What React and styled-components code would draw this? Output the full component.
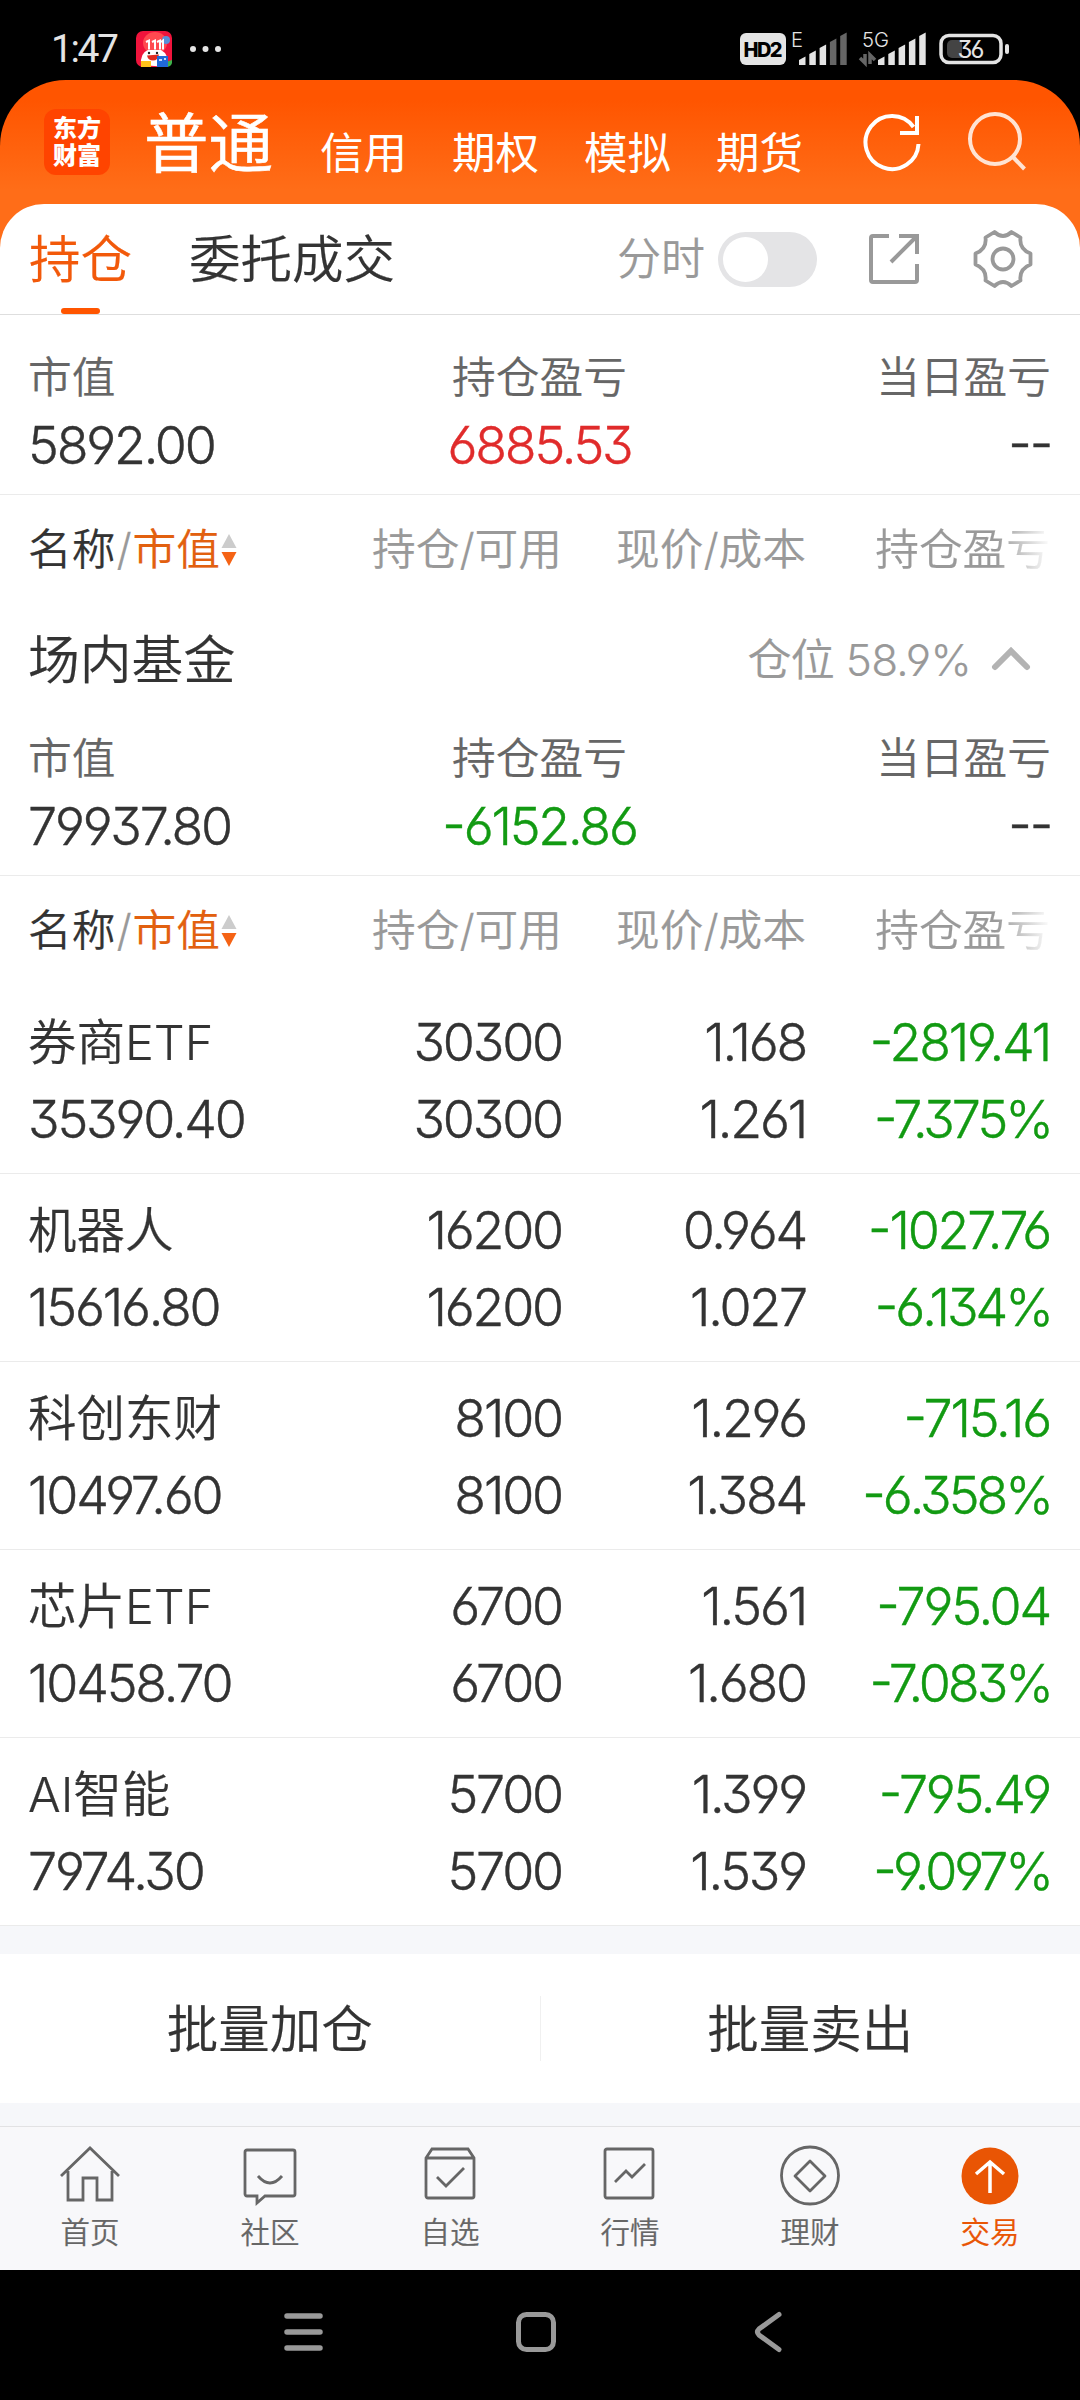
import React from 'react';
import styled, { createGlobalStyle } from 'styled-components';

const GlobalStyle = createGlobalStyle`
  * {
    box-sizing: border-box;
  }

  body {
    margin: 0;
    background: #000;
    font-family: Inter, "Noto Sans CJK SC", sans-serif;
    font-weight: 350;
    font-feature-settings: "cv03", "cv04", "cv09";
    color: #333;
  }

  svg {
    display: block;
    flex: none;
  }
`;

const Screen = styled.div`
  width: 1080px;
  height: 2400px;
  display: flex;
  flex-direction: column;
  overflow: hidden;
  background: #000;
  white-space: nowrap;
`;

const StatusBar = styled.div`
  height: 80px;
  flex: none;
  display: flex;
  align-items: center;
  padding: 18px 71px 0 51px;
  color: #e4e4e4;
`;

const Clock = styled.span`
  width: 85px;
  font: 400 39px/40px Roboto, sans-serif;
  letter-spacing: -2.4px;
`;

const StatusRight = styled.div`
  display: flex;
  margin-left: auto;
`;

const AppBody = styled.div`
  height: 2190px;
  flex: none;
  border-radius: 66px 66px 0 0;
  overflow: hidden;
  background: linear-gradient(180deg, #ff5500 0, #ff5500 20px, #ff6d18 110px, #ff6d18 100%);
`;

const Header = styled.header`
  height: 124px;
  display: flex;
  padding-left: 44px;
  color: #fff;
`;

const Logo = styled.div`
  width: 66px;
  height: 66px;
  margin-top: 29px;
  padding-top: 6px;
  border-radius: 12px;
  background: #ff4400;
  text-align: center;
  font-size: 24px;
  font-weight: 900;
  line-height: 27px;
`;

const AccountTab = styled.span`
  margin-left: ${(p) => (p.$active ? 34 : 45)}px;
  margin-top: ${(p) => (p.$active ? 22 : 31)}px;
  width: ${(p) => (p.$active ? 131 : 87)}px;
  font-size: ${(p) => (p.$active ? 64.5 : 43.5)}px;
  font-weight: 400;
  line-height: 84px;
  -webkit-text-stroke: ${(p) => (p.$active ? 0.5 : 0)}px currentColor;
`;

const HeaderIcons = styled.div`
  display: flex;
  gap: 44px;
  margin: 30px 0 0 60px;
`;

const Sheet = styled.main`
  height: 2066px;
  border-radius: 44px 44px 0 0;
  background: #fff;
  overflow: hidden;
  -webkit-text-stroke: 0.2px currentColor;
`;

const TabRow = styled.div`
  height: 111px;
  display: flex;
  padding: 0 46px 0 29px;
  border-bottom: 1px solid #dedede;
`;

const Tab = styled.div`
  display: flex;
  flex-direction: column;
  align-items: center;
  justify-content: space-between;
  margin-right: 57px;
  color: ${(p) => (p.$active ? '#f2590a' : '#333')};
  font-size: 51.5px;
  line-height: 110px;

  &::after {
    content: '';
    width: 39px;
    height: 6px;
    margin-top: -6px;
    border-radius: 3px;
    background: ${(p) => (p.$active ? '#ff5500' : 'transparent')};
  }
`;

const Tools = styled.div`
  display: flex;
  align-items: center;
  margin-left: auto;
  color: #999;
`;

const ToolLabel = styled.span`
  padding-bottom: 7px;
  font-size: 44px;
`;

const Toggle = styled.span`
  width: 99px;
  height: 55px;
  margin: 0 50px 0 13px;
  padding: 5px;
  border-radius: 28px;
  background: #e4e4e6;

  &::before {
    content: '';
    display: block;
    width: 45px;
    height: 45px;
    border-radius: 50%;
    background: #fff;
  }
`;

const Summary = styled.section`
  height: ${(p) => p.$height}px;
  display: grid;
  grid-template-columns: 1fr 1fr 1fr;
  align-content: end;
  padding: 0 29px 14px 28px;
  border-bottom: 1px solid #ebebeb;
`;

const Cell = styled.div`
  display: flex;
  flex-direction: column;
  align-items: ${(p) => p.$align};
`;

const Label = styled.span`
  color: #666;
  font-size: 43.7px;
  line-height: 68px;
`;

const tones = { up: '#e02b2b', down: '#129a12' };

const Num = styled.span`
  color: ${(p) => tones[p.$tone] || '#333'};
  font-size: 52px;
  font-weight: 300;
  font-feature-settings: "cv03", "cv04", "cv09", "case";
  letter-spacing: -2.2px;
  line-height: 68px;
  -webkit-text-stroke: 0.4px currentColor;
`;

const Percent = styled(Num)`
  margin-right: -1px;
  letter-spacing: -3px;
`;

const Columns = styled.div`
  display: grid;
  grid-template-columns: 274px 260px 244px 244px;
  padding: 0 30px 0 28px;
  text-align: right;
`;

const TableHead = styled(Columns)`
  height: ${(p) => p.$height}px;
  color: #999;
  font-size: 43.7px;
  line-height: 110px;
`;

const SortHead = styled.div`
  display: flex;
  align-items: center;
  gap: 1px;
  height: 110px;
`;

const Dark = styled.span`
  color: #333;
`;

const Hot = styled.span`
  color: #e2600f;
`;

const FadeHead = styled.span`
  background: linear-gradient(90deg, #999 0, #999 190px, #f6f6f6 240px);
  background-clip: text;
  color: transparent;
`;

const SectionTitle = styled.div`
  height: 96px;
  display: flex;
  align-items: center;
  padding: 0 49px 8px 28px;
  font-size: 51.8px;
`;

const Position = styled.div`
  display: flex;
  align-items: center;
  gap: 20px;
  margin-left: auto;
  padding-top: 1px;
  color: #999;
  font-size: 44px;
  letter-spacing: -0.7px;

  svg {
    margin-top: 4px;
  }
`;

const HoldingRow = styled(Columns)`
  height: 188px;
  padding-top: 18px;
  border-bottom: 1px solid #ebebeb;
`;

const Pair = styled.div`
  display: flex;
  flex-direction: column;

  ${Num} {
    line-height: 77px;
  }
`;

const Name = styled.span`
  height: 77px;
  font-size: 48.5px;
  line-height: 77px;
`;

const NamePair = styled(Pair)`
  text-align: left;
`;

const BatchActions = styled.div`
  height: 200px;
  display: flex;
  padding: 28px 0 23px;
  background: #f6f7fa;
`;

const BatchButton = styled.button`
  flex: 1;
  border: none;
  padding: 0 0 7px;
  background: #fff;
  color: #333;
  font: inherit;
  font-size: 51.5px;
`;

const Divider = styled.span`
  width: 1px;
  background: linear-gradient(#fff 28%, #f0f0f0 28%, #f0f0f0 72%, #fff 72%);
`;

const BottomNav = styled.nav`
  height: 144px;
  display: flex;
  border-top: 1px solid #e2e2e4;
  background: #f8f8fa;
`;

const NavItem = styled.div`
  flex: 1;
  display: flex;
  flex-direction: column;
  align-items: center;
  padding-top: 18px;
  color: ${(p) => (p.$active ? '#e95504' : '#666')};
  font-size: 29.5px;
  line-height: 50px;
`;

const SystemNav = styled.div`
  height: 130px;
  flex: none;
  display: flex;
  align-items: center;
  justify-content: center;
  gap: 191px;
  padding: 0 8px 6px 0;
`;

const GearSvg = styled.svg`
  margin-left: 51px;
`;

function Bars({ lit }) {
  return [0, 1, 2, 3, 4].map((i) => (
    <path
      key={i}
      d={`M${i * 10.3} 32v${-5 - i * 6}l6.5 -3.5v${8.5 + i * 6}z`}
      fill={i < lit ? '#e4e4e4' : '#666'}
    />
  ));
}

function StatusIcons() {
  return (
    <svg width="269" height="46" viewBox="0 -6 269 46" fontFamily="Inter, sans-serif">
      <rect x="0" y="1" width="46" height="32" rx="6" fill="#e4e4e4" />
      <text x="23" y="24.500" textAnchor="middle" fontSize="20" fontWeight="800" fill="#000" textLength="39">HD2</text>
      <text x="51" y="15" fontSize="20" fill="#e4e4e4" textLength="12" lengthAdjust="spacingAndGlyphs">E</text>
      <g transform="translate(59 1)"><Bars lit={3} /></g>
      <text x="122" y="15" fontSize="20" fill="#e4e4e4" textLength="27" lengthAdjust="spacingAndGlyphs">5G</text>
      <path d="M120 26l5 5V22M130 32V23l5 5" stroke="#666" strokeWidth="3.500" fill="none" />
      <g transform="translate(138 1)"><Bars lit={5} /></g>
      <rect x="201" y="3.500" width="60" height="27" rx="8" fill="none" stroke="#e4e4e4" strokeWidth="3.500" />
      <path d="M212 8h10v18h-10a5 5 0 0 1 -5 -5v-8a5 5 0 0 1 5 -5z" fill="#444" />
      <text x="231" y="26" textAnchor="middle" fontSize="24" fontWeight="400" fill="#e4e4e4" textLength="27">36</text>
      <rect x="265" y="12" width="4" height="10" rx="2" fill="#e4e4e4" />
    </svg>
  );
}

function PromoIcon() {
  return (
    <svg width="86" height="36" viewBox="0 0 86 36">
      <rect width="36" height="36" rx="7" fill="#f0143c" />
      <ellipse cx="19" cy="12" rx="12" ry="11" fill="#ff4a50" />
      <circle cx="30" cy="9" r="4" fill="#5a8fd8" />
      <path d="M30 36v-5l6 -2v3q-1 4 -6 4z" fill="#3cb44a" />
      <path d="M5 34q-1 -12 7 -15h13q8 4 7 17z" fill="#fff" />
      <path d="M10 11l3 -1.500v9M16 11l3 -1.500v9M21 11l3 -1.500v9M25 11l2 -1.500v9" stroke="#fff" strokeWidth="2" fill="none" />
      <circle cx="13" cy="22" r="1.200" fill="#222" />
      <circle cx="21" cy="22" r="1.200" fill="#222" />
      <path d="M11 24.500l12 -1q-1 6 -6 6t-6 -5z" fill="#e02a20" />
      <rect x="5" y="30" width="10" height="6" fill="#ffc21a" />
      <rect x="21" y="25" width="11" height="11" fill="#2068d8" />
      <path d="M23 29h3M28 28h2" stroke="#fff" strokeWidth="1.500" />
      <g fill="#e4e4e4">
        <circle cx="57" cy="18" r="3" />
        <circle cx="69.500" cy="18" r="3" />
        <circle cx="82" cy="18" r="3" />
      </g>
    </svg>
  );
}

function Gear() {
  return (
    <GearSvg width="62" height="62" viewBox="1 1 62 62" fill="none" stroke="#999" strokeWidth="3.800" strokeLinejoin="round">
      <path d="M23.500 5Q32 13 40.500 5L49.500 10.500Q48 22 59.500 26.500V37.500Q48 42 49.500 53.500L40.500 59Q32 51 23.500 59L14.500 53.500Q16 42 4.500 37.500V26.500Q16 22 14.500 10.500Z" />
      <circle cx="32" cy="32" r="10.500" />
    </GearSvg>
  );
}

function SortArrows() {
  return (
    <svg width="16" height="32" viewBox="0 0 16 32">
      <path d="M8 0L15.500 14H0.500z" fill="#ccc" />
      <path d="M8 32L15.500 18H0.500z" fill="#f56315" />
    </svg>
  );
}

function HeadRow({ height }) {
  return (
    <TableHead $height={height}>
      <SortHead>
        <Dark>名称</Dark>/<Hot>市值</Hot>
        <SortArrows />
      </SortHead>
      <span>持仓/可用</span>
      <span>现价/成本</span>
      <FadeHead>持仓盈亏</FadeHead>
    </TableHead>
  );
}

function SummaryRow({ height, value, profit, tone }) {
  return (
    <Summary $height={height}>
      <Cell $align="flex-start">
        <Label>市值</Label>
        <Num>{value}</Num>
      </Cell>
      <Cell $align="center">
        <Label>持仓盈亏</Label>
        <Num $tone={tone}>{profit}</Num>
      </Cell>
      <Cell $align="flex-end">
        <Label>当日盈亏</Label>
        <Num>--</Num>
      </Cell>
    </Summary>
  );
}

const holdings = [
  { name: '券商ETF', value: '35390.40', qty: '30300', price: '1.168', cost: '1.261', pnl: '-2819.41', pct: '-7.375%' },
  { name: '机器人', value: '15616.80', qty: '16200', price: '0.964', cost: '1.027', pnl: '-1027.76', pct: '-6.134%' },
  { name: '科创东财', value: '10497.60', qty: '8100', price: '1.296', cost: '1.384', pnl: '-715.16', pct: '-6.358%' },
  { name: '芯片ETF', value: '10458.70', qty: '6700', price: '1.561', cost: '1.680', pnl: '-795.04', pct: '-7.083%' },
  { name: 'AI智能', value: '7974.30', qty: '5700', price: '1.399', cost: '1.539', pnl: '-795.49', pct: '-9.097%' },
];

const navItems = [
  {
    label: '首页',
    icon: <path d="M2 31L31 3l29 28M9 26v29h15V33h14v22h15V26" />,
  },
  {
    label: '社区',
    icon: <path d="M8 5h46a2 2 0 0 1 2 2v42a2 2 0 0 1 -2 2H26l-8 7v-7H8a2 2 0 0 1 -2 -2V7a2 2 0 0 1 2 -2zM19 31q12 14 24 0" />,
  },
  {
    label: '自选',
    icon: <path d="M7 13l6 -9h36l6 9v38a2 2 0 0 1 -2 2H9a2 2 0 0 1 -2 -2zH55M18 32l9 9 18 -18" />,
  },
  {
    label: '行情',
    icon: <path d="M8 4h44a2 2 0 0 1 2 2v45a2 2 0 0 1 -2 2H8a2 2 0 0 1 -2 -2V6a2 2 0 0 1 2 -2zM16 37l11 -11 6 6 13 -13" />,
  },
  {
    label: '理财',
    icon: <path d="M31 2a28 28 0 1 1 0 57a28 28 0 1 1 0 -57zM31 16l15 15 -15 15 -15 -15z" strokeLinejoin="round" />,
  },
  {
    label: '交易',
    active: true,
    icon: (
      <>
        <circle cx="31" cy="31" r="28.500" fill="#e95504" stroke="none" />
        <path d="M31 48V17M17 29l14 -12 14 12" stroke="#fff" strokeWidth="3.500" />
      </>
    ),
  },
];

const App = () => {
  return (
    <>
      <GlobalStyle />
      <Screen>
        <StatusBar>
          <Clock>1:47</Clock>
          <PromoIcon />
          <StatusRight>
            <StatusIcons />
          </StatusRight>
        </StatusBar>

        <AppBody>
          <Header>
            <Logo>东方<br />财富</Logo>
            <AccountTab $active>普通</AccountTab>
            <AccountTab>信用</AccountTab>
            <AccountTab>期权</AccountTab>
            <AccountTab>模拟</AccountTab>
            <AccountTab>期货</AccountTab>
            <HeaderIcons>
              <svg width="60" height="62" viewBox="0 0 60 62" fill="none" stroke="#fff" strokeWidth="4">
                <path d="M55.500 34A26.500 26.500 0 1 1 50.500 17" />
                <path d="M54 6v17H37" />
              </svg>
              <svg width="60" height="62" viewBox="0 0 60 62" fill="none" stroke="#ffe3d3" strokeWidth="4">
                <circle cx="28" cy="29" r="25" />
                <path d="M45 46l12.500 13" />
              </svg>
            </HeaderIcons>
          </Header>

          <Sheet>
            <TabRow>
              <Tab $active>持仓</Tab>
              <Tab>委托成交</Tab>
              <Tools>
                <ToolLabel>分时</ToolLabel>
                <Toggle />
                <svg width="54" height="54" viewBox="0 0 54 54" fill="none" stroke="#999" strokeWidth="4">
                  <path d="M22 4H6a2 2 0 0 0 -2 2v42a2 2 0 0 0 2 2h42a2 2 0 0 0 2 -2V32M32 4h18v18M50 4L24 30" />
                </svg>
                <Gear />
              </Tools>
            </TabRow>

            <SummaryRow height={180} value="5892.00" profit="6885.53" tone="up" />
            <HeadRow height={117} />
            <SectionTitle>
              场内基金
              <Position>
                仓位 58.9%
                <svg width="40" height="24" viewBox="0 0 40 24" fill="none" stroke="#b3b3b3" strokeWidth="6" strokeLinecap="round">
                  <path d="M4 20L20 4l16 16" />
                </svg>
              </Position>
            </SectionTitle>
            <SummaryRow height={168} value="79937.80" profit="-6152.86" tone="down" />
            <HeadRow height={110} />

            {holdings.map((h) => (
              <HoldingRow key={h.name}>
                <NamePair>
                  <Name>{h.name}</Name>
                  <Num>{h.value}</Num>
                </NamePair>
                <Pair>
                  <Num>{h.qty}</Num>
                  <Num>{h.qty}</Num>
                </Pair>
                <Pair>
                  <Num>{h.price}</Num>
                  <Num>{h.cost}</Num>
                </Pair>
                <Pair>
                  <Num $tone="down">{h.pnl}</Num>
                  <Percent $tone="down">{h.pct}</Percent>
                </Pair>
              </HoldingRow>
            ))}

            <BatchActions>
              <BatchButton>批量加仓</BatchButton>
              <Divider />
              <BatchButton>批量卖出</BatchButton>
            </BatchActions>

            <BottomNav>
              {navItems.map((item) => (
                <NavItem key={item.label} $active={item.active}>
                  <svg width="62" height="62" viewBox="0 0 62 62" fill="none" stroke="currentColor" strokeWidth="2.800">
                    {item.icon}
                  </svg>
                  {item.label}
                </NavItem>
              ))}
            </BottomNav>
          </Sheet>
        </AppBody>

        <SystemNav>
          <svg width="42" height="42" viewBox="0 0 42 42" stroke="#999" strokeWidth="5.500" strokeLinecap="round">
            <path d="M5 5h33M5 21h33M5 37h33" />
          </svg>
          <svg width="42" height="42" viewBox="0 0 42 42" fill="none" stroke="#999" strokeWidth="5">
            <rect x="3.500" y="3.500" width="35" height="35" rx="8" />
          </svg>
          <svg width="42" height="42" viewBox="0 0 42 42" fill="none" stroke="#999" strokeWidth="5" strokeLinecap="round">
            <path d="M31 3.500L11 18q-3 3 0 6l20 14.500" />
          </svg>
        </SystemNav>
      </Screen>
    </>
  );
};

export default App;
